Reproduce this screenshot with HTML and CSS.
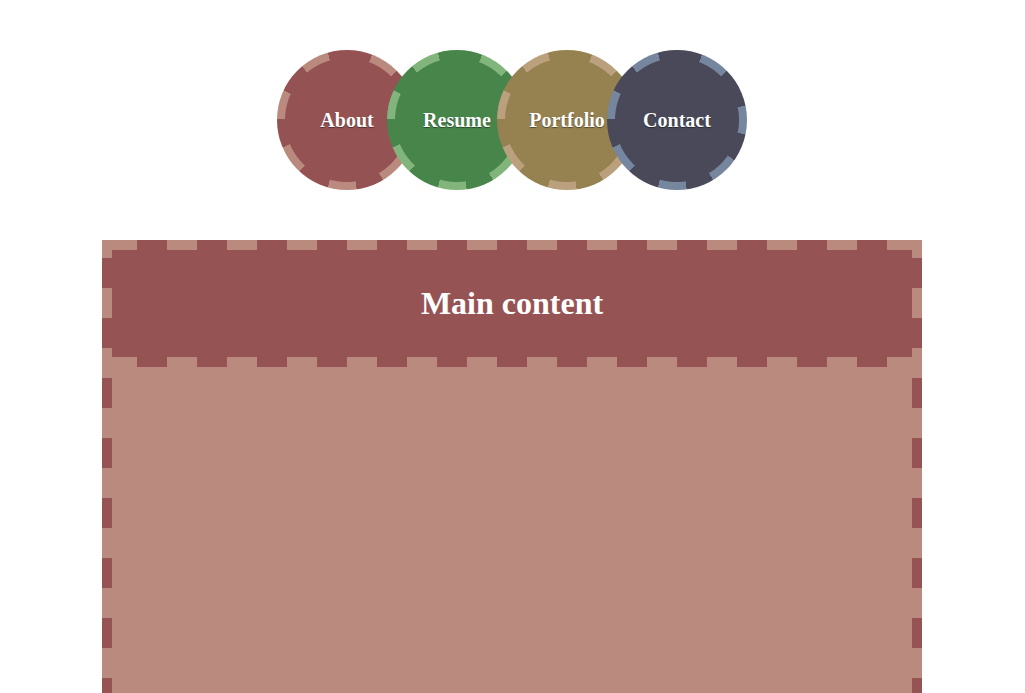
FILE: index.html
```html
<!DOCTYPE html>
<html>
<head>
<meta charset="utf-8">
<link rel="stylesheet" href="styles.css">
</head>
<body>
<nav class="nav">
  <a class="chip chip-about" href="#">About</a>
  <a class="chip chip-resume" href="#">Resume</a>
  <a class="chip chip-portfolio" href="#">Portfolio</a>
  <a class="chip chip-contact" href="#">Contact</a>
</nav>
<main class="main">
  <header class="main-header">
    <h1 class="main-title">Main content</h1>
  </header>
</main>
</body>
</html>
```

FILE: styles.css
```css
html, body {
  margin: 0;
  padding: 0;
  background: #ffffff;
}
body {
  padding-right: 1px;
  font-family: "Liberation Serif", "Times New Roman", serif;
}
.nav {
  display: flex;
  justify-content: center;
  padding-top: 50px;
}
.chip {
  --bg: #955253;
  --dash: #bb8a7f;
  box-sizing: border-box;
  width: 140px;
  height: 140px;
  flex: none;
  border-radius: 50%;
  display: flex;
  align-items: center;
  justify-content: center;
  color: #ffffff;
  font-weight: bold;
  font-size: 20px;
  text-decoration: none;
  text-shadow: 0 1px 1px rgba(0, 0, 0, 0.45);
  margin-left: -30px;
  background:
    radial-gradient(circle closest-side, var(--bg) 61.5px, transparent 62.5px),
    conic-gradient(
      var(--bg) 0deg 21deg,
      var(--dash) 21deg 45deg,
      var(--bg) 45deg 78deg,
      var(--dash) 78deg 102deg,
      var(--bg) 102deg 125deg,
      var(--dash) 125deg 149deg,
      var(--bg) 149deg 172deg,
      var(--dash) 172deg 196deg,
      var(--bg) 196deg 223deg,
      var(--dash) 223deg 247deg,
      var(--bg) 247deg 271deg,
      var(--dash) 271deg 295deg,
      var(--bg) 295deg 320deg,
      var(--dash) 320deg 344deg,
      var(--bg) 344deg 360deg
    );
}
.chip:first-child {
  margin-left: 0;
}
.chip-about {
  --bg: #955253;
  --dash: #bb8a7f;
}
.chip-resume {
  --bg: #47854a;
  --dash: #82b57b;
}
.chip-portfolio {
  --bg: #968151;
  --dash: #bba07d;
}
.chip-contact {
  --bg: #494959;
  --dash: #76869e;
}
.main {
  box-sizing: border-box;
  width: 820px;
  min-height: 620px;
  margin: 50px auto 0;
  padding: 10px;
  background-color: #bb8a7f;
  background-image:
    repeating-linear-gradient(to right, #965354 0 30px, transparent 30px 60px),
    repeating-linear-gradient(to bottom, #965354 0 30px, transparent 30px 60px),
    repeating-linear-gradient(to bottom, #965354 0 30px, transparent 30px 60px);
  background-size: 750px 10px, 10px 100%, 10px 100%;
  background-position: 35px 0, 0 18px, 100% 18px;
  background-repeat: no-repeat;
}
.main-header {
  padding: 35px 0 45px;
  text-align: center;
  background-image:
    linear-gradient(#965354, #965354),
    repeating-linear-gradient(to right, #965354 0 30px, transparent 30px 60px);
  background-size: 100% calc(100% - 10px), 750px 10px;
  background-position: 0 0, 25px 100%;
  background-repeat: no-repeat;
}
.main-title {
  margin: 0;
  color: #ffffff;
  font-size: 32px;
  line-height: 37px;
  font-weight: bold;
}
```
